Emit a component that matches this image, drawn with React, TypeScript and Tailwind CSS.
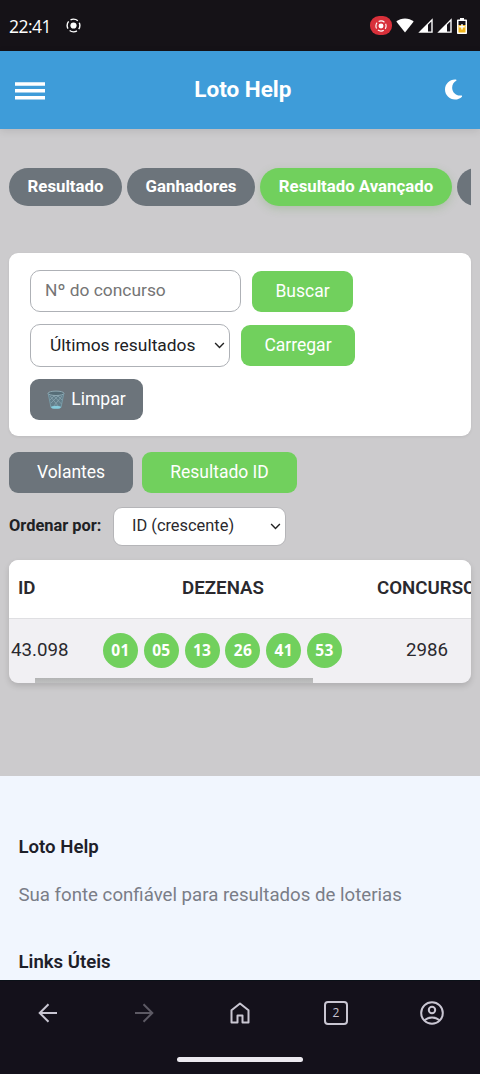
import { ReactNode } from 'react';
import clsx from 'clsx';
import { FaMoon } from 'react-icons/fa6';

const tabs = [
  { label: 'Resultado', width: 'w-[113px]', active: false },
  { label: 'Ganhadores', width: 'w-[128px]', active: false },
  { label: 'Resultado Avançado', width: 'w-[192px]', active: true },
  { label: '', width: 'w-[128px]', active: false },
];

const dezenas = ['01', '05', '13', '26', '41', '53'];

// Status bar icons
function RecordIcon({ className }: { className?: string }) {
  return (
    <svg className={className} viewBox="0 0 16 16" fill="none">
      <circle cx="8" cy="8" r="3.3" fill="currentColor" />
      <circle
        cx="8"
        cy="8"
        r="6.8"
        stroke="currentColor"
        strokeWidth="1.5"
        strokeDasharray="8.2 2.48"
        strokeDashoffset="4.1"
      />
    </svg>
  );
}

function WifiIcon() {
  return (
    <svg className="w-[18px] h-[15px]" viewBox="0 0 18 15">
      <path d="M9 14.5 0.3 3.6C2.8 1.5 5.8 0.4 9 0.4s6.2 1.1 8.7 3.2z" fill="#fff" />
    </svg>
  );
}

function SignalIcon() {
  return (
    <svg className="w-[15px] h-[15px]" viewBox="0 0 15 15">
      <path d="M0.3 14.7 14.7 0.3V14.7z" fill="#fff" />
      <path d="M10 6.8 13.3 3.5V13.4H10z" fill="#16131a" />
    </svg>
  );
}

function BatteryIcon() {
  return (
    <svg className="w-[10px] h-4" viewBox="0 0 10 16">
      <path d="M3 0h4v1.5h2.2q.8 0 .8.8V15.2q0 .8-.8.8H.8q-.8 0-.8-.8V2.3q0-.8.8-.8H3z" fill="#fff" />
      <path d="M1.5 3h7v4h-7z" fill="#16131a" />
      <path d="M1.5 7h7v7.5h-7z" fill="#f0b41c" />
      <path d="M4.3 6h1.4v2h2v1.5h-2v2H4.3v-2h-2V8h2z" fill="#fff" />
    </svg>
  );
}

function StatusBar() {
  return (
    <div className="h-[51px] shrink-0 bg-[#151217] text-white flex items-center px-[9px]">
      <span className="font-['Open_Sans'] font-medium text-[17.5px] leading-5 tracking-[-0.5px] w-[57px] mt-px">22:41</span>
      <RecordIcon className="w-[15px] h-[15px]" />
      <div className="ml-auto mr-[4.5px] flex items-center">
        <span className="w-[22px] h-[19px] rounded-[9px] bg-[#d8303a] flex items-center justify-center">
          <RecordIcon className="w-3 h-3" />
        </span>
        <span className="ml-1"><WifiIcon /></span>
        <span className="ml-1"><SignalIcon /></span>
        <span className="ml-1"><SignalIcon /></span>
        <span className="ml-[5px]"><BatteryIcon /></span>
      </div>
    </div>
  );
}

function Header() {
  return (
    <header className="relative z-10 h-[78px] shrink-0 bg-[#3e9cd9] flex items-center justify-between pl-[15px] pr-[18px] shadow-[0_2px_8px_rgba(0,0,0,0.1)]">
      <svg className="w-[30px] h-[18px] mt-px" viewBox="0 0 30 18" fill="#fff">
        <path d="M0 .2h30v3.6H0zM0 7h30v3.6H0zM0 14h30v3.6H0z" />
      </svg>
      <h1 className="text-white font-bold text-[22.5px] -ml-[4px]">Loto Help</h1>
      <FaMoon className="text-white w-[17.2px] h-[23px] -mt-px" />
    </header>
  );
}

function Chevron() {
  return (
    <svg className="w-[11px] h-[7px]" viewBox="0 0 12 8" fill="none">
      <path d="m1 1.2 5 5 5-5" stroke="#222" strokeWidth="1.6" />
    </svg>
  );
}

function TrashIcon() {
  return (
    <svg className="w-[18px] h-5" viewBox="0 0 18 20" fill="none">
      <path d="M1.5 3.5 4 17.5c1.5 1.8 8.5 1.8 10 0l2.5-14z" fill="#627e8a" />
      <path
        d="m3 6 9 11M6 5l8.5 9M10 5l5 5M15 6 6 17M12 5 4 13M8 5 3 10"
        stroke="#8fa9b3"
        strokeWidth=".7"
      />
      <path d="M1.2 3.5 4 17.5M16.8 3.5 14 17.5" stroke="#7ba3b1" strokeWidth=".8" />
      <ellipse cx="9" cy="3.3" rx="8" ry="2.2" fill="#566d77" stroke="#8fa9b3" />
      <ellipse cx="9" cy="17.2" rx="4.9" ry="1.5" fill="#86cbdc" />
    </svg>
  );
}

function Button({ gray, className, children }: { gray?: boolean; className?: string; children: ReactNode }) {
  return (
    <button
      className={clsx(
        'flex items-center justify-center rounded-[9px] text-white text-[17.5px] leading-[19px]',
        gray ? 'bg-[#6c747b]' : 'bg-[#71d05d]',
        className,
      )}
    >
      {children}
    </button>
  );
}

function Tabs() {
  return (
    <nav className="mx-[9px] h-[62px] pt-3 -mt-3 flex gap-[5px] overflow-hidden">
      {tabs.map((tab, i) => (
        <button
          key={i}
          className={clsx(
            'h-[38px] shrink-0 rounded-full text-white font-bold text-[16.8px] whitespace-nowrap',
            tab.width,
            tab.active ? 'bg-[#71d05d] shadow-[0_3px_8px_rgba(90,160,70,0.25)]' : 'bg-[#6c747b]',
          )}
        >
          {tab.label}
        </button>
      ))}
    </nav>
  );
}

function SearchCard() {
  return (
    <section className="mx-[9px] mt-[35px] h-[183px] rounded-[9px] bg-white pl-[21px] pt-[17px] shadow-[0_1px_3px_rgba(0,0,0,0.08)]">
      <div className="flex items-center gap-[11px]">
        <input
          className="w-[211px] h-[42px] rounded-[10px] border border-[#aeb1b6] pl-[14px] pb-[2px] text-[17.4px] placeholder:text-[#757575]"
          placeholder="Nº do concurso"
        />
        <Button className="w-[101px] h-[41px]">Buscar</Button>
      </div>
      <div className="mt-3 flex items-center gap-[11px]">
        <div className="w-[200px] h-[43px] rounded-[10px] border border-[#aeb1b6] pl-[19px] pr-1 flex items-center justify-between text-[17.4px] text-[#202124]">
          Últimos resultados
          <Chevron />
        </div>
        <Button className="w-[114px] h-[41px]">Carregar</Button>
      </div>
      <Button gray className="mt-3 w-[113px] h-[41px]">
        <TrashIcon />
        <span className="ml-[6px]">Limpar</span>
      </Button>
    </section>
  );
}

function ResultTable() {
  return (
    <section className="relative h-[123px] rounded-[9px] overflow-hidden bg-[#f1f0f3] text-[#2a292e]">
      <div className="h-[59px] pb-[2px] bg-white border-b border-[#dfdfe2] flex items-center whitespace-nowrap font-semibold text-[18.7px]">
        <span className="w-[94px] shrink-0 pl-[9px]">ID</span>
        <span className="w-[240px] shrink-0 text-center">DEZENAS</span>
        <span className="ml-[34px] shrink-0">CONCURSO</span>
      </div>
      <div className="h-[63px] flex items-center text-[18.7px]">
        <span className="w-[94px] pl-[2px] pb-px">43.098</span>
        <div className="flex gap-[5.8px]">
          {dezenas.map((n) => (
            <span
              key={n}
              className="size-[35px] rounded-full bg-[#71d05d] text-white font-['Open_Sans'] font-bold text-[15.5px] tracking-[0.3px] flex items-center justify-center"
            >
              {n}
            </span>
          ))}
        </div>
        <span className="ml-[64px] pb-px">2986</span>
      </div>
      {/* Horizontal scroll thumb */}
      <div className="absolute bottom-0 left-[26px] w-[278px] h-[5px] bg-gradient-to-b from-[#b2b3b3] to-[#bfc0c0]" />
    </section>
  );
}

function BottomNav() {
  return (
    <div className="h-[94px] shrink-0 bg-[#14111b] border-t border-[#0b1118] flex flex-col items-center text-[#c9c6d2]">
      <div className="w-full h-16 grid grid-cols-5 place-items-center">
        <svg className="w-5 h-5" viewBox="0 0 20 20" fill="none" stroke="currentColor" strokeWidth="2">
          <path d="M19 10H2M10.5 1.2 1.7 10l8.8 8.8" />
        </svg>
        <svg className="w-5 h-5 text-[#5d5a64]" viewBox="0 0 20 20" fill="none" stroke="currentColor" strokeWidth="2">
          <path d="M1 10h17M9.5 1.2l8.8 8.8-8.8 8.8" />
        </svg>
        <svg className="w-5 h-[22px]" viewBox="0 0 20 22" fill="none" stroke="currentColor" strokeWidth="2" strokeLinejoin="round">
          <path d="M1.5 8.3 10 1.5l8.5 6.8V20.5h-6v-7h-5v7h-6z" />
        </svg>
        <span className="size-6 rounded-[4px] border-2 border-[#c9c6d2] flex items-center justify-center font-['Open_Sans'] text-[12px] leading-none">
          2
        </span>
        <svg className="w-6 h-6" viewBox="0 0 24 24" fill="none" stroke="currentColor" strokeWidth="2">
          <circle cx="12" cy="12" r="10.8" />
          <circle cx="12" cy="9" r="3.2" />
          <path d="M4.3 19.3c4.5-3.7 10.9-3.7 15.4 0" />
        </svg>
      </div>
      <div className="mt-3 w-[126px] h-[5px] rounded-full bg-[#eceaf0]" />
    </div>
  );
}

export default function App() {
  return (
    <div className="w-[480px] h-[1074px] overflow-hidden flex flex-col font-[Roboto,sans-serif] bg-[#cccbcd]">
      <StatusBar />
      <Header />
      <main className="h-[647px] shrink-0 pt-[39px]">
        <Tabs />
        <SearchCard />
        <div className="mx-[9px] mt-4 flex gap-[9px]">
          <Button gray className="w-[124px] h-[41px]">Volantes</Button>
          <Button className="w-[155px] h-[41px]">Resultado ID</Button>
        </div>
        <div className="mx-[9px] mt-[14px] flex items-center">
          <span className="w-[104px] font-bold text-[16.4px] text-[#202124]">Ordenar por:</span>
          <div className="w-[173px] h-[39px] rounded-[9px] border border-[#b5b5b8] bg-white pl-[18px] pr-1 flex items-center justify-between text-[16.4px] text-[#2a292e]">
            ID (crescente)
            <Chevron />
          </div>
        </div>
        <div className="mx-[9px] mt-[14px] rounded-[9px] shadow-[0_3px_6px_rgba(0,0,0,0.14)]">
          <ResultTable />
        </div>
      </main>
      <footer className="h-[204px] shrink-0 overflow-hidden bg-[#f1f6fe] px-[18.5px] pt-[59px]">
        <h2 className="font-semibold text-[18.6px] leading-6 text-[#1d2029]">Loto Help</h2>
        <p className="mt-6 text-[18.65px] leading-6 text-[#7a7d87] whitespace-nowrap">Sua fonte confiável para resultados de loterias</p>
        <h2 className="mt-[43px] font-semibold text-[18.6px] leading-6 text-[#1d2029]">Links Úteis</h2>
      </footer>
      <BottomNav />
    </div>
  );
}
